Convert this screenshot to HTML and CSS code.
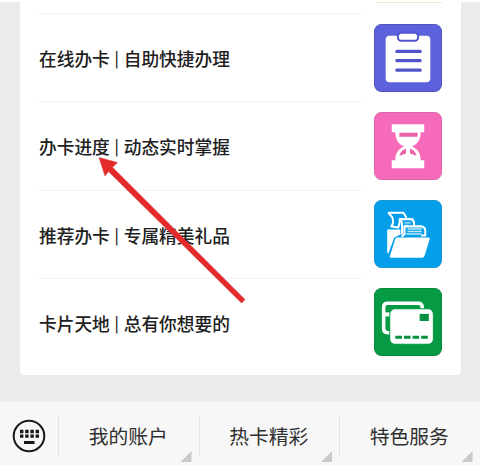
FILE: index.html
```html
<!DOCTYPE html>
<html lang="zh-CN">
<head>
<meta charset="utf-8">
<title>信用卡服务</title>
<link rel="stylesheet" href="styles.css">
</head>
<body>
<main class="chat">
  <section class="card">
    <div class="previous"><span class="previous-icon"></span></div>
    <div class="row">
      <div class="label">在线办卡 <span class="pipe">|</span> 自助快捷办理</div>
      <svg class="icon" viewBox="0 0 67 67">
        <rect x=".5" y=".5" width="66" height="66" rx="7" fill="#5d61dc" stroke="#5054bd"/>
        <rect x="11.5" y="11.5" width="44" height="46" rx="4" fill="#fff"/>
        <rect x="23.5" y="8.5" width="20" height="8" rx="3.5" fill="#fff" stroke="#5054cd" stroke-width="2"/>
        <path d="M22.500 27h23M22.500 36h23M22.500 45.500h23" stroke="#5054c8" stroke-width="3.200" stroke-linecap="round"/>
      </svg>
    </div>
    <div class="row">
      <div class="label">办卡进度 <span class="pipe">|</span> 动态实时掌握</div>
      <svg class="icon" viewBox="0 0 67 67">
        <rect x=".5" y=".5" width="66" height="66" rx="7" fill="#f56bb9" stroke="#df68ab"/>
        <path d="M17.500 12h32v8h-3.500c0 7-3 11.500-8.500 14 5.500 2.500 8.500 6.500 8.500 13.500h3.500v8h-32v-8H21c0-7 3-11 8.500-13.500C24 31.500 21 27 21 20h-3.500z" fill="#fff"/>
        <path d="M25 20.500h18v4H25zM31.500 36v5l-6.500 2c1-3.500 3-5.500 6.500-7zM35.500 36v5l6.500 2c-1-3.500-3-5.500-6.500-7z" fill="#ea62ac"/>
      </svg>
    </div>
    <div class="row">
      <div class="label">推荐办卡 <span class="pipe">|</span> 专属精美礼品</div>
      <svg class="icon" viewBox="0 0 67 67">
        <rect x=".5" y=".5" width="66" height="66" rx="7" fill="#049eea" stroke="#1596d5"/>
        <path d="M13 29h13v5l-6 3-6 16q-1 0-1-3z" fill="#fff"/>
        <path d="M14 12.500h15l3 5M14 12.500l4 4.500q2 6-1 9l7 1 2-8h12v6" fill="none" stroke="#fff" stroke-width="2" stroke-linejoin="round"/>
        <path d="M27 34c1.500-3 .5-7 .5-11q0-3-3-4h12q3 1 3 4v3" fill="#049eea" stroke="#fff" stroke-width="2"/>
        <path d="M30 22.500h6M30 25h4" stroke="#bce8fc" stroke-width="1.200"/>
        <path d="M27 36c4-1 3-5 3-10h17q3.500 1 3.500 4v5h-4" fill="#049eea" stroke="#fff" stroke-width="2" stroke-linejoin="round"/>
        <path d="M33 28.500h14M33 31h14M31 33.500h16" stroke="#bce8fc" stroke-width="1.500"/>
        <path d="M22.500 37h31q2 0 1.300 2l-5 16q-.5 2-2.500 2H17q-2 0-1.200-2l5-16q.5-2 1.700-2z" fill="#fff"/>
      </svg>
    </div>
    <div class="row">
      <div class="label">卡片天地 <span class="pipe">|</span> 总有你想要的</div>
      <svg class="icon" viewBox="0 0 67 67">
        <rect x=".5" y=".5" width="66" height="66" rx="7" fill="#059a43" stroke="#068b3d"/>
        <path d="M47.500 21v-2q0-4-4-4h-30q-4 0-4 4v21q0 4 4 4H16" fill="none" stroke="#fff" stroke-width="3.500"/>
        <path d="M10 24h7v4h-7z" fill="#fff"/>
        <rect x="15.500" y="20.500" width="43" height="35" rx="5" fill="#fff" stroke="#059a43"/>
        <path d="M45 25.500h9v7h-9z" fill="#068f3e"/>
        <path d="M21 48.500h32.500" stroke="#068f3e" stroke-width="3" stroke-dasharray="6.500 2"/>
      </svg>
    </div>
  </section>
  <svg class="pointer" viewBox="0 0 152 150">
    <path d="M3 1.500l18.500 5-5 4.800L149 143.500l-3.500 3.500L12.500 15.500 9 20z" fill="#e52a2c" stroke="#cf3030" stroke-width=".5"/>
  </svg>
</main>
<nav class="bar">
  <div class="keyboard">
    <svg class="keyboard-icon" viewBox="0 0 34 34">
      <circle cx="17" cy="17" r="15.300" fill="none" stroke="#171717" stroke-width="2"/>
      <path d="M8 12.500h19M8 17.200h19" stroke="#171717" stroke-width="3.300" stroke-dasharray="3.400 1.800"/>
      <path d="M12 23.500h10.500" stroke="#171717" stroke-width="3"/>
    </svg>
  </div>
  <div class="menu">我的账户<span class="corner"></span></div>
  <div class="menu">热卡精彩<span class="corner"></span></div>
  <div class="menu">特色服务<span class="corner"></span></div>
</nav>
</body>
</html>
```
FILE: styles.css
```css
* { box-sizing: border-box; }
body {
  margin: 0;
  height: 465px;
  overflow: hidden;
  display: flex;
  flex-direction: column;
  background: #f7f7f7;
  font-family: "Noto Sans CJK SC", sans-serif;
}
.chat {
  position: relative;
  height: 402px;
  padding: 0 19px 0 20px;
  background: #ebebeb;
  border-top: 2px solid #fff;
}
.card {
  height: 375px;
  margin-top: -2px;
  padding: 0 19px;
  background: #fff;
  border-radius: 0 0 4px 4px;
}
.previous {
  height: 13px;
  display: flex;
  justify-content: flex-end;
}
.previous-icon {
  width: 66px;
  height: 3px;
  border-bottom: 1px solid #f1ead0;
}
.row {
  height: 88.3px;
  display: flex;
  justify-content: space-between;
}
.label {
  width: 324px;
  border-top: 1px solid #f3f3f3;
  font-size: 17.7px;
  font-weight: 500;
  line-height: 88px;
  white-space: nowrap;
  color: #202020;
}
.pipe {
  display: inline-block;
  width: 6px;
  font-size: 15.5px;
  line-height: 1;
  text-align: center;
  vertical-align: 2px;
}
.icon {
  flex: none;
  width: 68px;
  height: 68px;
  margin-top: 10.5px;
}
.pointer {
  position: absolute;
  left: 96px;
  top: 154px;
  width: 152px;
  height: 150px;
}
.bar {
  height: 63px;
  display: flex;
  padding-top: 14px;
  background: #f7f7f7;
}
.keyboard {
  width: 58px;
  padding: 3px 0 0 12px;
}
.keyboard-icon {
  display: block;
  width: 34px;
  height: 34px;
}
.menu {
  position: relative;
  width: 140.5px;
  height: 40px;
  padding-right: 1px;
  border-left: 1px solid #e3e3e3;
  font-size: 19.8px;
  line-height: 40px;
  text-align: center;
  color: #303030;
}
.corner {
  position: absolute;
  right: 7px;
  top: 35px;
  width: 11px;
  height: 11px;
  background: #c9c9c9;
  clip-path: polygon(100% 0, 100% 100%, 0 100%);
}
```
